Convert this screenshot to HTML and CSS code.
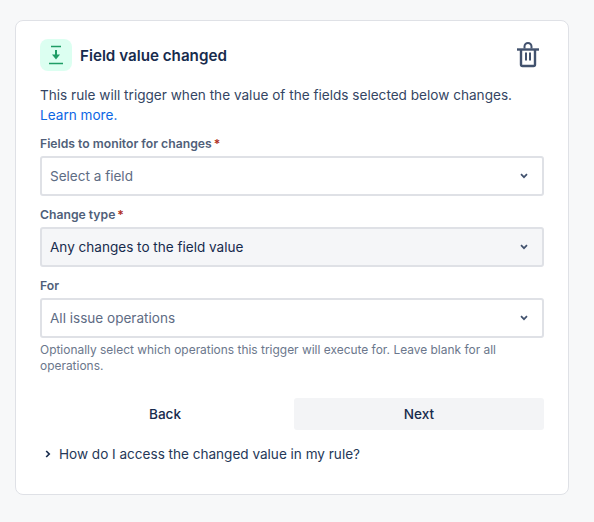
FILE: index.html
```html
<!DOCTYPE html>
<html lang="en">
<head>
<meta charset="utf-8">
<title>Field value changed</title>
<link rel="stylesheet" href="styles.css">
</head>
<body>
<main class="card">
  <header class="head">
    <span class="badge">
      <svg width="32" height="32" viewBox="0 0 32 32" fill="none"><path d="M11 7.5h10M9 24.5h14" stroke="#1f9d66" stroke-width="1.7"/><path d="M16 11v6" stroke="#1f9d66" stroke-width="2"/><path d="M12 15.5h8L16 20.5z" fill="#1f9d66"/></svg>
    </span>
    <h1 class="title">Field value changed</h1>
    <svg class="trash" width="24" height="28" viewBox="0 0 24 28" fill="none" stroke="#42526e" stroke-width="2.4"><path d="M1 7.5h22"/><path d="M8.5 6.5V4.5a3.5 3.5 0 0 1 7 0v2" stroke-width="2"/><path d="M5 8v14.5a1.5 1.5 0 0 0 1.5 1.5h11a1.5 1.5 0 0 0 1.5-1.5V8"/><path d="M10 10.5v8M14 10.5v8" stroke-width="2"/></svg>
  </header>
  <p class="intro">This rule will trigger when the value of the fields selected below changes. <a class="link" href="#">Learn more.</a></p>
  <div class="field first">
    <div class="label">Fields to monitor for changes<span class="req">*</span></div>
    <div class="select"><span class="placeholder">Select a field</span><svg class="chev" width="8" height="6" viewBox="0 0 8 6" fill="none"><path d="M1 1.2l3 3 3-3" stroke="#42526e" stroke-width="1.7"/></svg></div>
  </div>
  <div class="field">
    <div class="label">Change type<span class="req">*</span></div>
    <div class="select filled"><span class="value">Any changes to the field value</span><svg class="chev" width="8" height="6" viewBox="0 0 8 6" fill="none"><path d="M1 1.2l3 3 3-3" stroke="#42526e" stroke-width="1.7"/></svg></div>
  </div>
  <div class="field">
    <div class="label">For</div>
    <div class="select"><span class="placeholder">All issue operations</span><svg class="chev" width="8" height="6" viewBox="0 0 8 6" fill="none"><path d="M1 1.2l3 3 3-3" stroke="#42526e" stroke-width="1.7"/></svg></div>
    <p class="help">Optionally select which operations this trigger will execute for. Leave blank for all operations.</p>
  </div>
  <div class="actions">
    <button class="btn" type="button">Back</button>
    <button class="btn next" type="button">Next</button>
  </div>
  <div class="faq">
    <svg width="6" height="8" viewBox="0 0 6 8" fill="none"><path d="M1.2 1l3 3-3 3" stroke="#172b4d" stroke-width="1.7"/></svg>
    <span>How do I access the changed value in my rule?</span>
  </div>
</main>
</body>
</html>
```
FILE: styles.css
```css
* { box-sizing: border-box; }
html, body { margin: 0; height: 100%; }
body {
  background: #f7f8f9;
  font-family: Inter, "Liberation Sans", sans-serif;
  color: #172b4d;
  padding: 20px 25px 27px 15px;
}
.card {
  width: 554px;
  height: 475px;
  background: #fff;
  border: 1px solid #dfe1e6;
  border-radius: 8px;
  padding: 18px 24px 0;
}
.head { display: flex; align-items: center; height: 32px; }
.badge {
  width: 32px; height: 32px;
  border-radius: 8px;
  background: #dcfff1;
  display: flex;
  flex: none;
}
.title {
  margin: 0 0 0 8px;
  flex: 1;
  font-size: 15.2px;
  line-height: 33px;
  font-weight: 600;
  color: #172b4d;
}
.trash { flex: none; margin-right: 4px; margin-top: 1px; }
.intro {
  margin: 14px 0 0;
  font-size: 13.6px;
  line-height: 20px;
  color: #344563;
}
.link { color: #0c66e4; text-decoration: none; }
.field { margin-top: 11px; }
.field.first { margin-top: 11px; }
.label {
  font-size: 12.2px;
  line-height: 16px;
  font-weight: 600;
  color: #505f79;
  margin-bottom: 4px;
}
.req { color: #ae2e24; margin-left: 2px; }
.select {
  height: 40px;
  border: 2px solid #dfe1e6;
  border-radius: 3px;
  background: #fff;
  display: flex;
  align-items: center;
  justify-content: space-between;
  padding: 0 14px 0 8px;
  font-size: 13.55px;
}
.select.filled { background: #f5f6f8; }
.placeholder { color: #5e6c84; }
.value { color: #172b4d; }
.help {
  margin: 4px 0 0;
  font-size: 11.95px;
  line-height: 16px;
  color: #6b778c;
}
.actions {
  display: grid;
  grid-template-columns: 1fr 1fr;
  gap: 4px;
  margin-top: 24px;
}
.btn {
  height: 32px;
  border: 0;
  border-radius: 3px;
  background: transparent;
  font-family: inherit;
  font-size: 13.6px;
  font-weight: 500;
  color: #172b4d;
}
.btn.next { background: #f3f4f6; }
.faq {
  display: flex;
  align-items: center;
  gap: 8px;
  margin-top: 14px;
  padding-left: 5px;
  height: 20px;
  font-size: 13.55px;
  color: #253858;
}
```
